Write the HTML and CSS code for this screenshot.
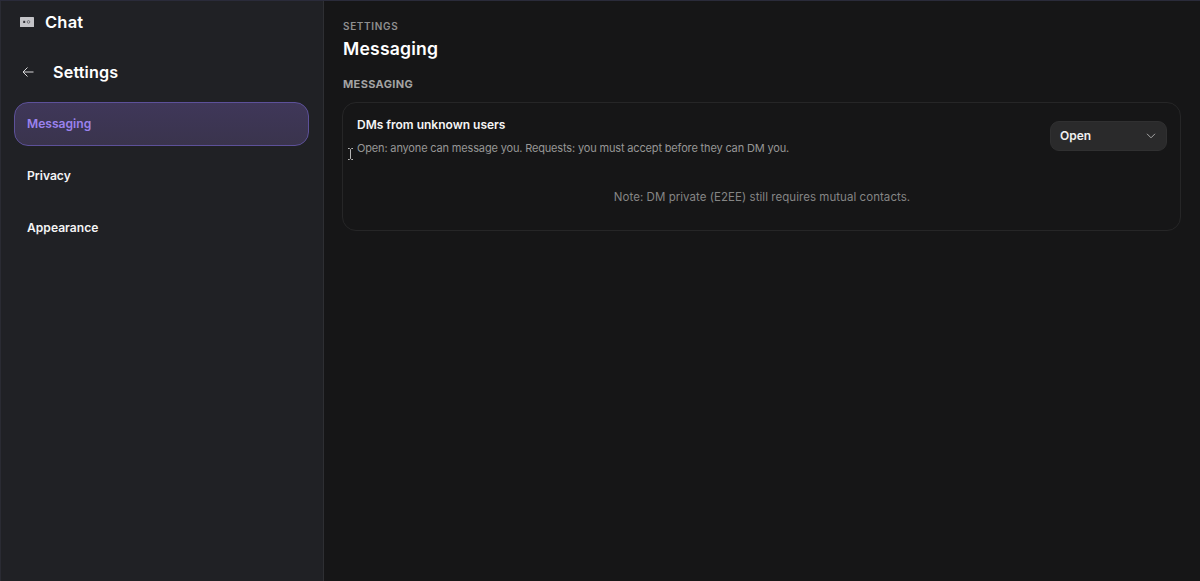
FILE: index.html
```html
<!DOCTYPE html>
<html lang="en">
<head>
<meta charset="utf-8">
<title>Settings - Messaging</title>
<link rel="stylesheet" href="styles.css">
</head>
<body>
<div class="app">
  <aside class="sidebar">
    <div class="brand">
      <svg class="brand-icon" width="16" height="12" viewBox="0 0 16 12" aria-hidden="true">
        <rect x="1" y="1" width="14" height="10" rx=".6" fill="#c4c4c8"/>
        <rect x="4.200" y="4.800" width="2" height="2.200" fill="#34343a"/>
        <circle cx="9.500" cy="5.900" r="1.300" fill="none" stroke="#5c5c62" stroke-width=".8"/>
      </svg>
      <span class="brand-name">Chat</span>
    </div>
    <div class="back-row">
      <svg class="back-icon" width="14" height="14" viewBox="0 0 14 14" aria-hidden="true">
        <path d="M12.500 7H2M6.500 2.500 2 7l4.500 4.500" fill="none" stroke="#d8d8da" stroke-width="1"/>
      </svg>
      <span class="back-title">Settings</span>
    </div>
    <nav class="nav">
      <a class="nav-item nav-item-active">Messaging</a>
      <a class="nav-item">Privacy</a>
      <a class="nav-item">Appearance</a>
    </nav>
  </aside>
  <main class="content">
    <div class="eyebrow">SETTINGS</div>
    <h1 class="page-title">Messaging</h1>
    <h2 class="section-title">MESSAGING</h2>
    <section class="card">
      <div class="row">
        <div class="row-text">
          <div class="row-title">DMs from unknown users</div>
          <div class="row-desc">Open: anyone can message you. Requests: you must accept before they can DM you.</div>
        </div>
        <div class="select">
          <span>Open</span>
          <svg width="10" height="6" viewBox="0 0 10 6" aria-hidden="true">
            <path d="M1 .8 5 4.800 9 .8" fill="none" stroke="#a8a8a8" stroke-width="1"/>
          </svg>
        </div>
      </div>
      <p class="note">Note: DM private (E2EE) still requires mutual contacts.</p>
    </section>
    <svg class="cursor" width="7" height="12" viewBox="0 0 7 12" aria-hidden="true">
      <path d="M1 .5h1.500L3.500 1.500 4.500 .5H6M3.500 1.500v9M1 11.500h1.500l1-1 1 1H6" fill="none" stroke="#b5b5b5" stroke-width="1"/>
    </svg>
  </main>
</div>
</body>
</html>
```
FILE: styles.css
```css
* { box-sizing: border-box; }
html, body { height: 100%; }
body {
  margin: 0;
  background: #161617;
  color: #fff;
  font-family: "Inter", "Liberation Sans", sans-serif;
  overflow: hidden;
}
.app {
  display: flex;
  height: 581px;
  border-top: 1px solid #2a2b3a;
  background: #161617;
}
.sidebar {
  width: 324px;
  flex: none;
  background: #202125;
  border-right: 1px solid #2e2f33;
  border-left: 1px solid #2a2b33;
  padding: 0 14px 0 13px;
}
.brand {
  display: flex;
  align-items: center;
  height: 42px;
  padding-left: 5px;
  gap: 10px;
}
.brand-name {
  font-size: 16.500px;
  font-weight: 600;
  letter-spacing: .2px;
}
.back-row {
  display: flex;
  align-items: center;
  height: 30px;
  margin-top: 14px;
  padding-left: 7px;
  gap: 18px;
}
.back-title {
  font-size: 16.200px;
  font-weight: 600;
  letter-spacing: .15px;
}
.nav {
  display: flex;
  flex-direction: column;
  gap: 8px;
  margin-top: 15px;
}
.nav-item {
  display: flex;
  align-items: center;
  height: 44px;
  padding: 0 12px 2px;
  border: 1px solid transparent;
  border-radius: 14px;
  font-size: 12.100px;
  font-weight: 600;
  color: #f4f4f5;
}
.nav-item-active {
  background: linear-gradient(#3f3759, #3a344d);
  border-color: #5d519a;
  color: #9b82ee;
}
.content {
  position: relative;
  flex: 1;
  min-width: 0;
  padding: 19px 19px 0 18px;
}
.eyebrow {
  padding-left: 1px;
  font-size: 10px;
  font-weight: 600;
  letter-spacing: .65px;
  line-height: 13px;
  color: #8f8f8f;
}
.page-title {
  margin: 2px 0 0;
  padding-left: 1px;
  font-size: 17.600px;
  line-height: 27px;
  font-weight: 600;
  letter-spacing: .2px;
}
.section-title {
  margin: 15px 0 0;
  padding-left: 1px;
  font-size: 11px;
  line-height: 14px;
  font-weight: 700;
  letter-spacing: .35px;
  color: #a3a3a3;
}
.card {
  margin-top: 11px;
  height: 129px;
  border: 1px solid #262627;
  border-radius: 14px;
  padding: 14px 13px 14px 14px;
}
.row {
  display: flex;
  justify-content: space-between;
  align-items: flex-start;
}
.row-title {
  font-size: 12px;
  font-weight: 600;
  line-height: 16px;
  color: #f5f5f5;
}
.row-desc {
  margin-top: 7px;
  font-size: 11px;
  letter-spacing: -.16px;
  line-height: 16px;
  color: #969696;
}
.select {
  display: flex;
  justify-content: space-between;
  align-items: center;
  width: 117px;
  height: 30px;
  margin-top: 4px;
  padding: 0 10px 1px 9px;
  background: #2a2a2b;
  border: 1px solid #303031;
  border-radius: 9px;
  font-size: 12px;
  font-weight: 600;
  color: #f0f0f0;
}
.note {
  margin: 33px 0 0;
  text-align: center;
  font-size: 11.500px;
  line-height: 16px;
  color: #858585;
  letter-spacing: .05px;
}
.cursor {
  position: absolute;
  left: 23px;
  top: 147px;
}
```
